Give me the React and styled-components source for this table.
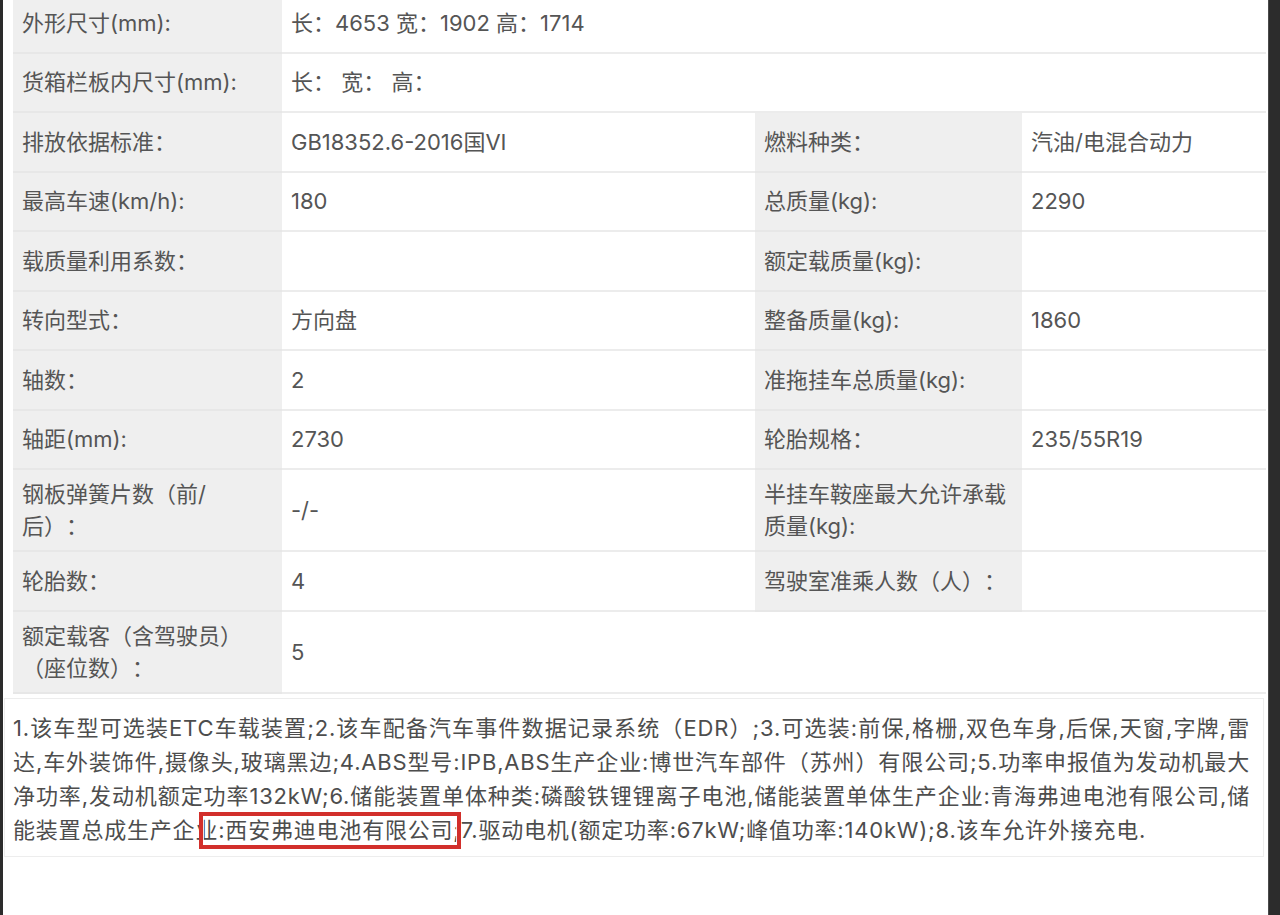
import React from "react";
import styled, { createGlobalStyle } from "styled-components";

const GlobalStyle = createGlobalStyle`
  html, body { margin: 0; padding: 0; background: #fff; }
  body {
    font-family: Inter, "Noto Sans CJK SC", sans-serif;
    text-spacing-trim: space-all;
  }
`;

const Frame = styled.div`
  display: flex;
  width: 1280px;
  height: 915px;
  overflow: hidden;
  background: #fff;
`;

const Edge = styled.div`
  flex: 0 0 ${(p) => p.$w}px;
  background: #2c2c2c;
  border-left: ${(p) => (p.$lit ? "1px solid #4a4a4a" : "none")};
  box-sizing: border-box;
`;

const Sheet = styled.main`
  flex: 1;
  display: flex;
  flex-direction: column;
  background: #fff;
`;

const SpecGrid = styled.section`
  display: grid;
  grid-template-columns: 269px 473px 267px 244px;
  width: 1253px;
  margin: -6px 0 0 10px;
  font-size: 22px;
  color: #555;
`;

const Cell = styled.div`
  box-sizing: border-box;
  min-height: 59.5px;
  display: flex;
  align-items: center;
  padding: 8px 8px 8px 9px;
  line-height: 32px;
  background: ${(p) => (p.$label ? "#efefef" : "#fff")};
  border-bottom: 2px solid ${(p) => (p.$label ? "#e7e7e7" : "#ececec")};
  grid-column: span ${(p) => p.$span || 1};
`;

const LabelText = styled.span`
  max-width: 246px;
`;

const Remarks = styled.p`
  position: relative;
  box-sizing: border-box;
  width: 1260px;
  margin: 4px 0 0 1px;
  padding: 12px 13px 9px 8px;
  border: 1px solid #ededed;
  font-size: 22px;
  letter-spacing: 0.8px;
  line-height: 34px;
  text-align: justify;
  color: #4d4d4d;
`;

/* red annotation frame drawn over the 4th line of the remarks */
const Highlight = styled.span`
  position: absolute;
  left: 194px;
  top: 113px;
  width: 262px;
  height: 37px;
  box-sizing: border-box;
  border: 4px solid #d22f2b;
  box-shadow: inset 0 0 0 1px rgba(255, 255, 255, 0.85);
  pointer-events: none;
`;

const rows = [
  [["外形尺寸(mm):", true], ["长：4653 宽：1902 高：1714", false, 3]],
  [["货箱栏板内尺寸(mm):", true], ["长： 宽： 高：", false, 3]],
  [
    ["排放依据标准：", true],
    ["GB18352.6-2016国VI"],
    ["燃料种类：", true],
    ["汽油/电混合动力"],
  ],
  [["最高车速(km/h):", true], ["180"], ["总质量(kg):", true], ["2290"]],
  [["载质量利用系数：", true], [""], ["额定载质量(kg):", true], [""]],
  [["转向型式：", true], ["方向盘"], ["整备质量(kg):", true], ["1860"]],
  [["轴数：", true], ["2"], ["准拖挂车总质量(kg):", true], [""]],
  [["轴距(mm):", true], ["2730"], ["轮胎规格：", true], ["235/55R19"]],
  [
    ["钢板弹簧片数（前/后）：", true],
    ["-/-"],
    ["半挂车鞍座最大允许承载质量(kg):", true],
    [""],
  ],
  [["轮胎数：", true], ["4"], ["驾驶室准乘人数（人）：", true], [""]],
  [["额定载客（含驾驶员）（座位数）：", true], ["5", false, 3]],
];

const remarkText =
  "1.该车型可选装ETC车载装置;2.该车配备汽车事件数据记录系统（EDR）;3.可选装:前保,格栅,双色车身,后保,天窗,字牌,雷达,车外装饰件,摄像头,玻璃黑边;4.ABS型号:IPB,ABS生产企业:博世汽车部件（苏州）有限公司;5.功率申报值为发动机最大净功率,发动机额定功率132kW;6.储能装置单体种类:磷酸铁锂锂离子电池,储能装置单体生产企业:青海弗迪电池有限公司,储能装置总成生产企业:西安弗迪电池有限公司;7.驱动电机(额定功率:67kW;峰值功率:140kW);8.该车允许外接充电.";

export default function App() {
  return (
    <>
      <GlobalStyle />
      <Frame>
        <Edge $w={3} />
        <Sheet>
          <SpecGrid>
            {rows.map((row, r) =>
              row.map(([text, isLabel, span], c) => (
                <Cell key={`${r}-${c}`} $label={isLabel} $span={span}>
                  {isLabel ? <LabelText>{text}</LabelText> : text}
                </Cell>
              ))
            )}
          </SpecGrid>
          <Remarks>
            {remarkText}
            <Highlight aria-hidden="true" />
          </Remarks>
        </Sheet>
        <Edge $w={12} $lit />
      </Frame>
    </>
  );
}
